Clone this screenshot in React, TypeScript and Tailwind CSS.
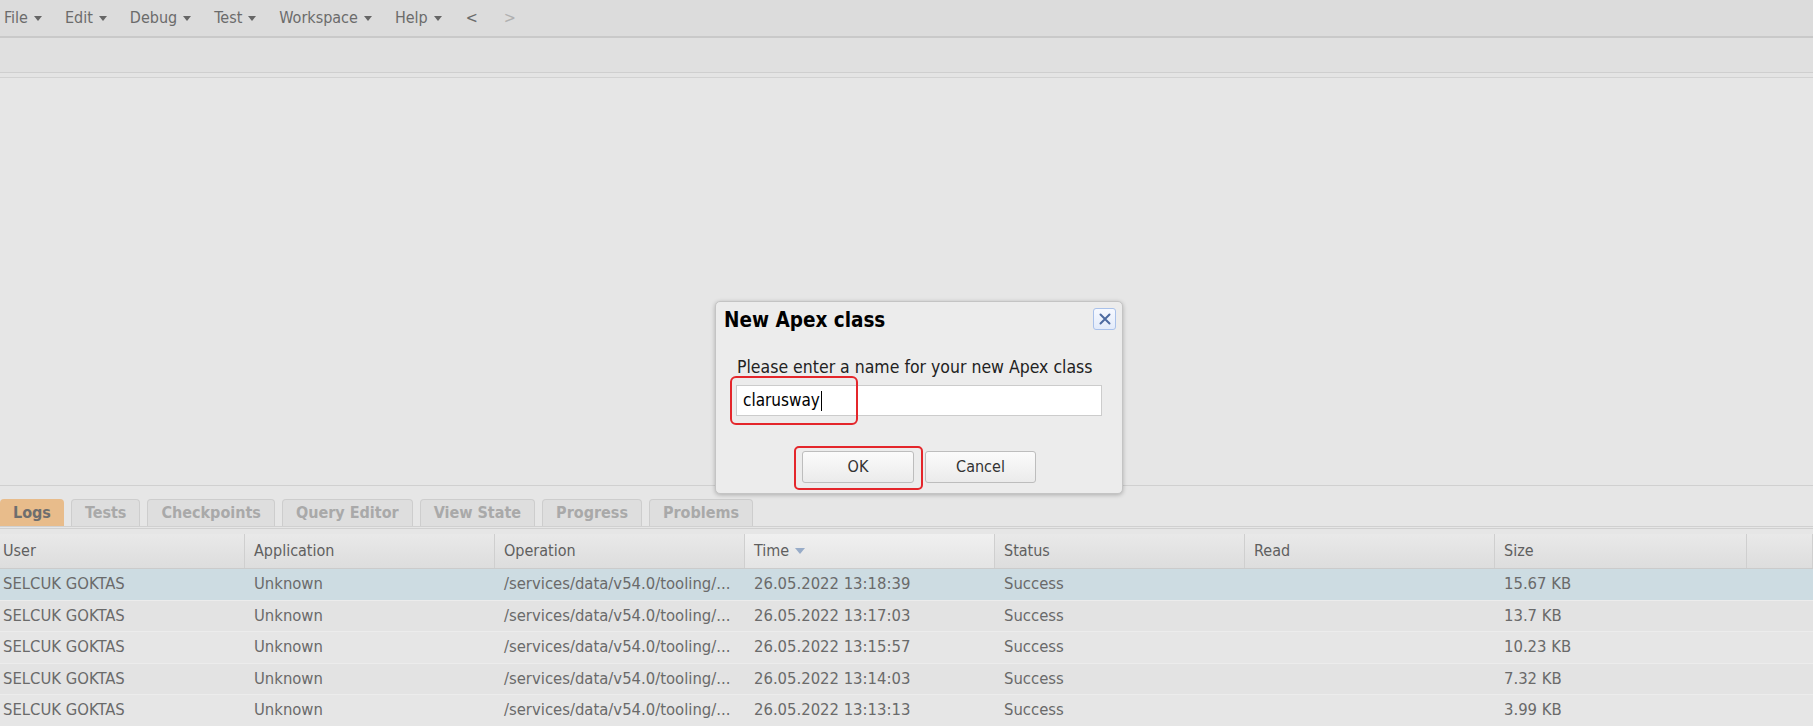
import React from 'react';

const FONT = { fontFamily: '"DejaVu Sans Condensed", "Liberation Sans", Arial, sans-serif' };

const menus = ['File', 'Edit', 'Debug', 'Test', 'Workspace', 'Help'];
const tabs = ['Logs', 'Tests', 'Checkpoints', 'Query Editor', 'View State', 'Progress', 'Problems'];
const columns = ['User', 'Application', 'Operation', 'Time', 'Status', 'Read', 'Size', ''];

const rows = [
  { time: '26.05.2022 13:18:39', size: '15.67 KB' },
  { time: '26.05.2022 13:17:03', size: '13.7 KB' },
  { time: '26.05.2022 13:15:57', size: '10.23 KB' },
  { time: '26.05.2022 13:14:03', size: '7.32 KB' },
  { time: '26.05.2022 13:13:13', size: '3.99 KB' },
];

const GRID = 'grid grid-cols-[245px_250px_250px_250px_250px_250px_252px_1fr]';

function Caret() {
  return <span className="ml-[6px] inline-block h-0 w-0 border-x-[4px] border-t-[5px] border-x-transparent border-t-[#666] align-middle" />;
}

export default function App() {
  return (
    <div className="relative flex h-[726px] w-[1813px] flex-col overflow-hidden bg-[#e6e6e6]" style={FONT}>
      {/* Menu bar */}
      <div className="flex h-[38px] shrink-0 items-center border-b-2 border-[#c9c9c9] bg-[#dcdcdc] pl-[4px] text-[16px] text-[#6b6b6b]">
        {menus.map((m) => (
          <span key={m} className="mr-[23px] flex items-center">
            {m}
            <Caret />
          </span>
        ))}
        <span className="ml-[1px] mr-[26px]">&lt;</span>
        <span className="text-[#b0b0b0]">&gt;</span>
      </div>

      {/* Toolbar */}
      <div className="h-[35px] shrink-0 border-b border-[#cfcfcf] bg-[#e0e0e0]" />
      <div className="h-[5px] shrink-0 border-b border-[#d2d2d2] bg-[#e4e4e4]" />

      {/* Editor area */}
      <div className="h-[408px] shrink-0 border-b border-[#d0d0d0] bg-[#e6e6e6]" />

      {/* Bottom panel */}
      <div className="flex flex-1 flex-col pt-[13px]">
        <div className="flex h-[30px] shrink-0 gap-[7px] border-b-[3px] border-double border-[#d0d0d0]">
          {tabs.map((t, i) => (
            <div
              key={t}
              className={
                i === 0
                  ? 'flex items-center rounded-t-[4px] bg-[#e8bc8b] px-[13px] text-[16px] font-bold text-[#6e6e6e]'
                  : 'flex items-center rounded-t-[4px] border border-b-0 border-[#cdcdcd] bg-[#dedede] px-[13px] text-[16px] font-bold text-[#a9a9a9]'
              }
            >
              {t}
            </div>
          ))}
        </div>

        {/* Table header */}
        <div className={`${GRID} mt-[5px] h-[35px] shrink-0 border-b border-[#cbcbcb] bg-gradient-to-b from-[#e9e9e9] to-[#dddddd] text-[16px] text-[#5f5f5f]`}>
          {columns.map((c, i) => (
            <div
              key={i}
              className={`flex items-center border-r border-[#cfcfcf] ${i === 0 ? 'pl-[3px]' : 'pl-[9px]'} ${c === 'Time' ? 'bg-gradient-to-b from-[#f0f0f0] to-[#e4e4e4]' : ''}`}
            >
              {c}
              {c === 'Time' && (
                <span className="ml-[6px] inline-block h-0 w-0 border-x-[5px] border-t-[6px] border-x-transparent border-t-[#98acc8]" />
              )}
            </div>
          ))}
        </div>

        {/* Rows */}
        {rows.map((r, i) => (
          <div
            key={r.time}
            className={`${GRID} h-[31.6px] shrink-0 border-b border-[#ececec] text-[16.5px] text-[#6a6a6a] ${
              i === 0 ? 'bg-[#cddce2]' : i % 2 === 1 ? 'bg-[#e3e3e3]' : 'bg-[#e6e6e6]'
            }`}
          >
            <div className="flex items-center pl-[3px]">SELCUK GOKTAS</div>
            <div className="flex items-center pl-[9px]">Unknown</div>
            <div className="flex items-center pl-[9px]">/services/data/v54.0/tooling/...</div>
            <div className="flex items-center pl-[9px]">{r.time}</div>
            <div className="flex items-center pl-[9px]">Success</div>
            <div className="flex items-center pl-[9px]" />
            <div className="flex items-center pl-[9px]">{r.size}</div>
            <div />
          </div>
        ))}
      </div>

      {/* Dialog */}
      <div className="absolute left-[715px] top-[301px] h-[193px] w-[408px] rounded-[5px] border border-[#c4c4c4] bg-[#ececec] shadow-[0_1px_4px_rgba(0,0,0,0.25)]">
        <div className="flex items-start justify-between pl-[8px] pr-[6px] pt-[3px]">
          <span className="text-[20.5px] font-bold text-black">New Apex class</span>
          <button className="mt-[3px] flex h-[22px] w-[23px] items-center justify-center rounded-[3px] border border-[#a9c1ea] bg-gradient-to-b from-[#f6f9ff] to-[#e3ebfa]">
            <svg width="12" height="12" viewBox="0 0 12 12">
              <path d="M1.5 1.5 L10.5 10.5 M10.5 1.5 L1.5 10.5" stroke="#4d6aa0" strokeWidth="2" strokeLinecap="round" />
            </svg>
          </button>
        </div>

        <div className="px-[21px] pt-[18px] text-[17.5px] text-[#222]">Please enter a name for your new Apex class</div>

        <div className="relative ml-[20px] mt-[5px] h-[31px] w-[366px]">
          <div className="flex h-full items-center border border-[#cccccc] bg-white pl-[6px] text-[17px] text-black">
            clarusway
            <span className="ml-[1px] inline-block h-[20px] w-[1px] bg-black" />
          </div>
          <div className="absolute -left-[6px] -top-[9px] h-[49px] w-[128px] rounded-[6px] border-2 border-[#e4262b]" />
        </div>

        <div className="mt-[35px] flex gap-[11px] pl-[86px]">
          <div className="relative">
            <button className="h-[32px] w-[112px] rounded-[3px] border border-[#bdbdbd] bg-gradient-to-b from-[#fbfbfb] to-[#ebebeb] text-[16px] text-[#333]">
              OK
            </button>
            <div className="absolute -left-[8px] -top-[5px] h-[44px] w-[129px] rounded-[5px] border-2 border-[#e4262b]" />
          </div>
          <button className="h-[32px] w-[111px] rounded-[3px] border border-[#bdbdbd] bg-gradient-to-b from-[#fbfbfb] to-[#ebebeb] text-[16px] text-[#333]">
            Cancel
          </button>
        </div>
      </div>
    </div>
  );
}
